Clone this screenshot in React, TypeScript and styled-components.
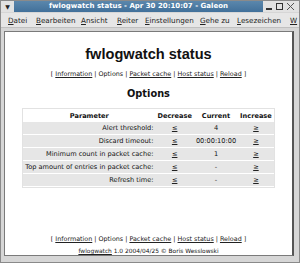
import React, { FC } from "react";
import styled, { createGlobalStyle } from "styled-components";

const GlobalStyle = createGlobalStyle`
  html, body {
    margin: 0;
    padding: 0;
    overflow: hidden;
    background: #d4d4d4;
  }
`;

const Window = styled.div`
  width: 300px;
  height: 263px;
  box-sizing: border-box;
  background: #d6d6d6;
  border: 1px solid #8a8a8a;
  display: flex;
  flex-direction: column;
  font-family: "DejaVu Sans", sans-serif;
  overflow: hidden;
`;

const TitleBar = styled.div`
  height: 11px;
  display: flex;
  align-items: stretch;
  background: #e2e2e2;
`;

const WindowMenu = styled.div`
  width: 13px;
  font-size: 6px;
  line-height: 11px;
  text-align: center;
  color: #222;
`;

const TitleArea = styled.div`
  flex: 1;
  background: linear-gradient(to bottom, #5b87ac, #41709a);
  color: #fff;
  font-weight: bold;
  font-size: 7px;
  line-height: 11px;
  text-align: center;
  white-space: nowrap;
  overflow: hidden;
`;

const Controls = styled.div`
  width: 34px;
  display: flex;
  align-items: center;
  justify-content: space-evenly;
  padding-right: 2px;
`;

const MenuBar = styled.div`
  height: 14px;
  display: flex;
  align-items: center;
  padding-left: 7px;
  margin-top: 1px;
  background: #e6e6e6;
  border-bottom: 1px solid #c0c0c0;
  font-size: 7.2px;
  color: #222;
  white-space: nowrap;
`;

const MenuItem = styled.span<{ $w: number }>`
  width: ${(p) => p.$w}px;
  flex: none;
  span {
    text-decoration: underline;
  }
`;

const Frame = styled.div`
  flex: 1;
  display: flex;
  padding: 3px 5px 6px 3px;
  background: #d6d6d6;
`;

const Page = styled.div`
  flex: 1;
  background: #fff;
  border: 1px solid #7a7a7a;
  border-right: 2px solid #555;
  display: flex;
  flex-direction: column;
  align-items: center;
  color: #111;
`;

const Heading = styled.h1`
  margin: 13px 0 0;
  font-family: "Liberation Sans", Arial, sans-serif;
  font-size: 14.6px;
  font-weight: bold;
  line-height: 18px;
`;

const Nav = styled.div<{ $top: number }>`
  margin-top: ${(p) => p.$top}px;
  font-size: 6.4px;
  line-height: 10px;
  white-space: nowrap;
`;

const Link = styled.a`
  color: #222;
  text-decoration: underline;
`;

const SubHeading = styled.h2`
  margin: 8px 0 0;
  font-size: 9.8px;
  font-weight: bold;
  line-height: 13px;
`;

const Table = styled.table`
  margin-top: 8px;
  width: 248px;
  border-collapse: separate;
  border-spacing: 0 1px;
  border: 1px solid #e2e2e2;
  font-size: 6.6px;
`;

const Th = styled.th`
  font-weight: bold;
  height: 11px;
  padding: 0 2px;
  text-align: center;
  background: #fff;
`;

const Td = styled.td<{ $align?: string }>`
  height: 12px;
  padding: 0 2px;
  background: #e6e6e6;
  text-align: ${(p) => p.$align || "center"};
  white-space: nowrap;
`;

const Footer = styled.div`
  margin-top: auto;
  display: flex;
  flex-direction: column;
  align-items: center;
`;

const Credit = styled.div`
  margin-top: 3px;
  font-size: 5.9px;
  line-height: 8px;
  white-space: nowrap;
`;

const menus: [string, string, number][] = [
  ["D", "atei", 28],
  ["B", "earbeiten", 45],
  ["A", "nsicht", 36],
  ["R", "eiter", 28],
  ["E", "instellungen", 55],
  ["G", "ehe zu", 37],
  ["L", "esezeichen", 53],
  ["W", "", 10],
];

const rows: [string, string][] = [
  ["Alert threshold:", "4"],
  ["Discard timeout:", "00:00:10:00"],
  ["Minimum count in packet cache:", "1"],
  ["Top amount of entries in packet cache:", "-"],
  ["Refresh time:", "-"],
];

const NavLinks: FC<{ top: number }> = ({ top }) => (
  <Nav $top={top}>
    [ <Link>Information</Link> | Options | <Link>Packet cache</Link> |{" "}
    <Link>Host status</Link> | <Link>Reload</Link> ]
  </Nav>
);

const WindowButtons: FC = () => (
  <svg width="30" height="9" viewBox="0 0 30 9">
    <rect x="1" y="6" width="6" height="2" fill="#333" />
    <rect x="11.5" y="1.5" width="6" height="6" fill="none" stroke="#333" />
    <path d="M22 1 L29 8 M29 1 L22 8" stroke="#555" strokeWidth="1" />
  </svg>
);

export default function App() {
  return (
    <>
      <GlobalStyle />
      <Window>
        <TitleBar>
          <WindowMenu>▼</WindowMenu>
          <TitleArea>fwlogwatch status - Apr 30 20:10:07 - Galeon</TitleArea>
          <Controls>
            <WindowButtons />
          </Controls>
        </TitleBar>
        <MenuBar>
          {menus.map(([k, rest, w]) => (
            <MenuItem key={k} $w={w}>
              <span>{k}</span>
              {rest}
            </MenuItem>
          ))}
        </MenuBar>
        <Frame>
          <Page>
            <Heading>fwlogwatch status</Heading>
            <NavLinks top={6} />
            <SubHeading>Options</SubHeading>
            <Table>
              <thead>
                <tr>
                  <Th>Parameter</Th>
                  <Th>Decrease</Th>
                  <Th>Current</Th>
                  <Th>Increase</Th>
                </tr>
              </thead>
              <tbody>
                {rows.map(([label, value]) => (
                  <tr key={label}>
                    <Td $align="right">{label}</Td>
                    <Td>
                      <Link>≤</Link>
                    </Td>
                    <Td>{value}</Td>
                    <Td>
                      <Link>≥</Link>
                    </Td>
                  </tr>
                ))}
              </tbody>
            </Table>
            <Footer>
              <NavLinks top={0} />
              <Credit>
                <Link>fwlogwatch</Link> 1.0 2004/04/25 © Boris Wesslowski
              </Credit>
            </Footer>
          </Page>
        </Frame>
      </Window>
    </>
  );
}
